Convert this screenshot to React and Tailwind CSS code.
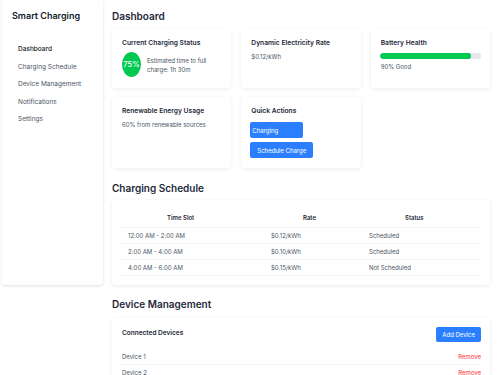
const navItems = ["Dashboard", "Charging Schedule", "Device Management", "Notifications", "Settings"];

const schedule = [
  { slot: "12:00 AM - 2:00 AM", rate: "$0.12/kWh", status: "Scheduled" },
  { slot: "2:00 AM - 4:00 AM", rate: "$0.10/kWh", status: "Scheduled" },
  { slot: "4:00 AM - 6:00 AM", rate: "$0.15/kWh", status: "Not Scheduled" },
];

const devices = ["Device 1", "Device 2"];

const Card = ({ children, className = "" }) => (
  <div className={`bg-white rounded-[4px] shadow-[0_1px_4px_rgba(0,0,0,0.08)] ${className}`}>
    {children}
  </div>
);

const CardTitle = ({ children }) => (
  <h3 className="text-[6.7px] font-semibold text-gray-800 leading-[10px]">{children}</h3>
);

export default function App() {
  return (
    <div className="flex w-[500px] min-h-[375px] bg-white text-gray-700 font-['Inter',sans-serif]">
      <aside className="ml-[2px] w-[101px] h-[285px] shrink-0 bg-white rounded-b-[3px] shadow-[0_1px_3px_rgba(0,0,0,0.12)] pt-[9px]">
        <h1 className="pl-[10px] text-[9px] font-semibold text-gray-900 leading-[14px]">Smart Charging</h1>
        <nav className="mt-[22px] flex flex-col gap-[8px] pl-[16px]">
          {navItems.map((item, i) => (
            <a
              key={item}
              className={`text-[6.5px] leading-[9.5px] ${i === 0 ? "font-medium text-gray-900" : "text-gray-600"}`}
            >
              {item}
            </a>
          ))}
        </nav>
      </aside>

      <main className="flex-1 pl-[9px] pr-[10px] pt-[9px]">
        <h2 className="text-[10px] font-semibold text-gray-800 leading-[14px]">Dashboard</h2>

        <div className="mt-[6px] grid grid-cols-3 gap-x-[10px] gap-y-[9px]">
          <Card className="px-[10px] pt-[9px] pb-[10px] h-[59px]">
            <CardTitle>Current Charging Status</CardTitle>
            <div className="mt-[4px] flex items-center gap-[6px]">
              <div className="w-[19px] h-[25px] rounded-[50%] bg-green-500 flex items-center justify-center text-white text-[7.5px] font-medium">
                75%
              </div>
              <p className="text-[6px] leading-[9px] text-gray-600">
                Estimated time to full
                <br />
                charge: 1h 30m
              </p>
            </div>
          </Card>

          <Card className="px-[10px] pt-[9px]">
            <CardTitle>Dynamic Electricity Rate</CardTitle>
            <p className="mt-[4px] text-[6px] leading-[9px] text-gray-600">$0.12/kWh</p>
          </Card>

          <Card className="px-[9px] pt-[9px]">
            <div className="pl-[1px]">
              <CardTitle>Battery Health</CardTitle>
            </div>
            <div className="mt-[5px] h-[6px] w-full rounded-full bg-gray-200 overflow-hidden">
              <div className="h-full rounded-full bg-green-500" style={{ width: "90%" }} />
            </div>
            <p className="mt-[3px] pl-[1px] text-[6px] leading-[9px] text-gray-600">90% Good</p>
          </Card>

          <Card className="px-[10px] pt-[9px] h-[71px]">
            <CardTitle>Renewable Energy Usage</CardTitle>
            <p className="mt-[4px] text-[6px] leading-[9px] text-gray-600">60% from renewable sources</p>
          </Card>

          <Card className="px-[9px] pt-[9px]">
            <div className="pl-[1px]">
              <CardTitle>Quick Actions</CardTitle>
            </div>
            <div className="mt-[6px] flex flex-col items-start gap-[4px]">
              <button className="w-[53px] h-[16px] rounded-[2px] bg-blue-500 text-white text-[6px] text-left pl-[2px]">
                Charging
              </button>
              <button className="h-[16px] rounded-[2px] bg-blue-500 text-white text-[6px] px-[7px]">
                Schedule Charge
              </button>
            </div>
          </Card>
        </div>

        <h2 className="mt-[13px] text-[10px] font-semibold text-gray-800 leading-[14px]">Charging Schedule</h2>
        <Card className="mt-[5px] px-[9px] pt-[9px] pb-[9px]">
          <table className="w-full table-fixed border-collapse text-[6px]">
            <colgroup>
              <col className="w-[143px]" />
              <col className="w-[98px]" />
              <col />
            </colgroup>
            <thead>
              <tr className="border-b border-gray-100 h-[18px]">
                <th className="text-left font-semibold text-gray-800 pl-[46px]">Time Slot</th>
                <th className="text-left font-semibold text-gray-800 pl-[39px]">Rate</th>
                <th className="text-left font-semibold text-gray-800 pl-[43px]">Status</th>
              </tr>
            </thead>
            <tbody>
              {schedule.map((row) => (
                <tr key={row.slot} className="border-b border-gray-100 h-[16px] text-gray-600">
                  <td className="pl-[7px]">{row.slot}</td>
                  <td className="pl-[7px]">{row.rate}</td>
                  <td className="pl-[7px]">{row.status}</td>
                </tr>
              ))}
            </tbody>
          </table>
        </Card>

        <h2 className="mt-[12px] text-[10px] font-semibold text-gray-800 leading-[14px]">Device Management</h2>
        <Card className="mt-[7px] px-[9px] pt-[9px] pb-[9px]">
          <div className="flex items-center justify-between pl-[1px]">
            <h3 className="text-[6.5px] font-semibold text-gray-800">Connected Devices</h3>
            <button className="h-[15px] px-[6px] rounded-[2px] bg-blue-500 text-white text-[6px]">Add Device</button>
          </div>
          <ul className="mt-[7px]">
            {devices.map((d) => (
              <li key={d} className="flex items-center justify-between h-[16px] pl-[1px] border-b border-gray-100 text-[6px]">
                <span className="text-gray-600">{d}</span>
                <span className="text-red-500">Remove</span>
              </li>
            ))}
          </ul>
        </Card>
      </main>
    </div>
  );
}
